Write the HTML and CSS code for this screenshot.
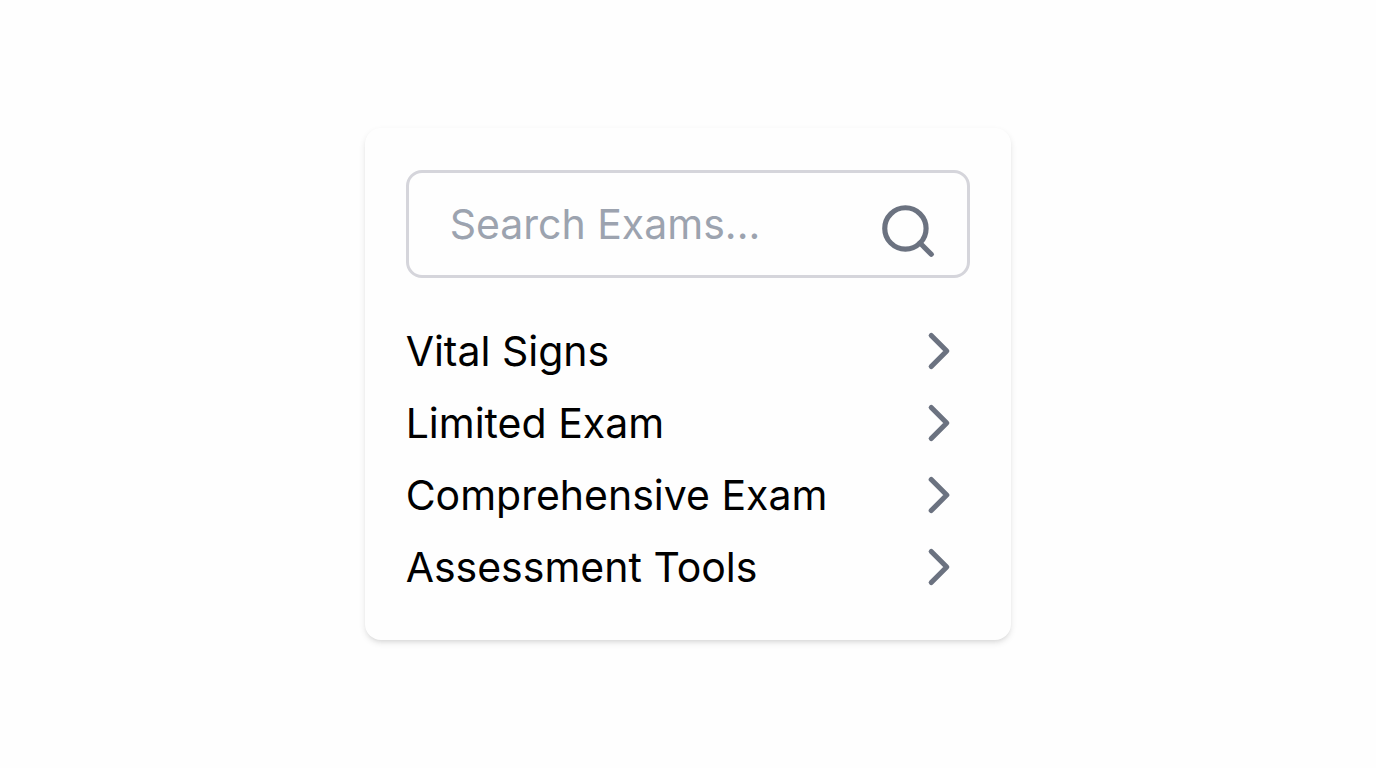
FILE: index.html
```html
<!DOCTYPE html>
<html lang="en">
<head>
<meta charset="utf-8">
<meta name="viewport" content="width=device-width, initial-scale=1">
<title>Exams</title>
<link rel="stylesheet" href="styles.css">
</head>
<body>
<main class="card">
  <form class="search" role="search">
    <input class="search-input" type="text" placeholder="Search Exams..." aria-label="Search exams">
    <button class="search-button" type="submit" aria-label="Search">
      <svg class="search-icon" viewBox="0 0 24 24" aria-hidden="true"><circle cx="11" cy="11" r="8"/><path d="M21 21l-4.35-4.35"/></svg>
    </button>
  </form>
  <ul class="exams">
    <li><button class="exam" type="button"><span>Vital Signs</span><svg class="chevron" viewBox="0 0 24 24" aria-hidden="true"><path d="M9 18l6-6-6-6"/></svg></button></li>
    <li><button class="exam" type="button"><span>Limited Exam</span><svg class="chevron" viewBox="0 0 24 24" aria-hidden="true"><path d="M9 18l6-6-6-6"/></svg></button></li>
    <li><button class="exam" type="button"><span>Comprehensive Exam</span><svg class="chevron" viewBox="0 0 24 24" aria-hidden="true"><path d="M9 18l6-6-6-6"/></svg></button></li>
    <li><button class="exam" type="button"><span>Assessment Tools</span><svg class="chevron" viewBox="0 0 24 24" aria-hidden="true"><path d="M9 18l6-6-6-6"/></svg></button></li>
  </ul>
</main>
</body>
</html>
```
FILE: styles.css
```css
*, *::before, *::after {
  box-sizing: border-box;
}

body {
  display: grid;
  place-items: center;
  min-height: 100vh;
  margin: 0;
  background: #fefefe;
  color: #000;
  font-family: Inter, "Liberation Sans", sans-serif;
  font-size: 41px;
  line-height: 62px;
}

.card {
  width: 47%;
  min-width: 560px;
  padding: 42px 41px;
  border-radius: 16px;
  background: #fefefe;
  box-shadow: 0 3px 6px rgba(0, 0, 0, 0.1), 0 3px 5px -3px rgba(0, 0, 0, 0.1);
}

.search {
  position: relative;
  margin-bottom: 42px;
}

.search-input {
  display: block;
  width: 100%;
  padding: 20px 108px 20px 41px;
  border: 3px solid #d5d5db;
  border-radius: 16px;
  background: #fefefe;
  color: inherit;
  font: inherit;
}

.search-input::placeholder {
  color: #9ca3af;
  opacity: 1;
}

.search-button {
  position: absolute;
  right: 31px;
  bottom: 16px;
  padding: 0;
  border: 0;
  background: none;
}

.search-icon,
.chevron {
  display: block;
  width: 62px;
  height: 62px;
  fill: none;
  stroke: #6b7280;
  stroke-width: 2;
  stroke-linecap: round;
  stroke-linejoin: round;
}

.exams {
  display: grid;
  gap: 10px;
  margin: 0;
  padding: 0;
  list-style: none;
}

.exam {
  display: flex;
  align-items: center;
  justify-content: space-between;
  width: 100%;
  padding: 0;
  border: 0;
  background: none;
  color: inherit;
  font: inherit;
  text-align: left;
}
```
